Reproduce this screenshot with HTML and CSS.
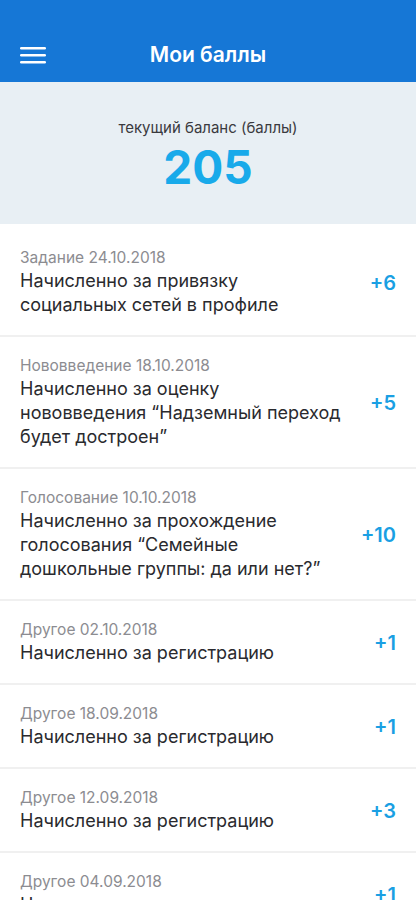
FILE: index.html
```html
<!DOCTYPE html>
<html lang="ru">
  <head>
    <meta charset="UTF-8" />
    <meta name="viewport" content="width=device-width, initial-scale=1.0" />
    <title>Мои баллы</title>
    <link rel="stylesheet" href="styles.css">
  </head>
  <body>
    <header class="top-bar">
      <button class="menu-btn" aria-label="Меню">
        <svg width="26" height="18" viewBox="0 0 26 18">
          <rect x="0" y="1" width="26" height="2.4" rx="1.2" fill="#fff" />
          <rect x="0" y="8" width="26" height="2.4" rx="1.2" fill="#fff" />
          <rect x="0" y="15" width="26" height="2.4" rx="1.2" fill="#fff" />
        </svg>
      </button>
      <h1 class="top-title">Мои баллы</h1>
    </header>

    <section class="balance">
      <div class="balance-label">текущий баланс (баллы)</div>
      <div class="balance-value">205</div>
    </section>

    <ul class="history">
      <li class="history-item">
        <div class="item-text">
          <div class="item-meta">Задание 24.10.2018</div>
          <div class="item-title">Начисленно за привязку социальных сетей в профиле</div>
        </div>
        <div class="item-points">+6</div>
      </li>
      <li class="history-item">
        <div class="item-text">
          <div class="item-meta">Нововведение 18.10.2018</div>
          <div class="item-title">Начисленно за оценку нововведения “Надземный переход будет достроен”</div>
        </div>
        <div class="item-points">+5</div>
      </li>
      <li class="history-item">
        <div class="item-text">
          <div class="item-meta">Голосование 10.10.2018</div>
          <div class="item-title">Начисленно за прохождение голосования “Семейные дошкольные группы: да или нет?”</div>
        </div>
        <div class="item-points">+10</div>
      </li>
      <li class="history-item">
        <div class="item-text">
          <div class="item-meta">Другое 02.10.2018</div>
          <div class="item-title">Начисленно за регистрацию</div>
        </div>
        <div class="item-points">+1</div>
      </li>
      <li class="history-item">
        <div class="item-text">
          <div class="item-meta">Другое 18.09.2018</div>
          <div class="item-title">Начисленно за регистрацию</div>
        </div>
        <div class="item-points">+1</div>
      </li>
      <li class="history-item">
        <div class="item-text">
          <div class="item-meta">Другое 12.09.2018</div>
          <div class="item-title">Начисленно за регистрацию</div>
        </div>
        <div class="item-points">+3</div>
      </li>
      <li class="history-item">
        <div class="item-text">
          <div class="item-meta">Другое 04.09.2018</div>
          <div class="item-title">Начисленно за регистрацию</div>
        </div>
        <div class="item-points">+1</div>
      </li>
    </ul>
  </body>
</html>
```

FILE: styles.css
```css
body {
  margin: 0;
  font-family: Inter, "Noto Sans", sans-serif;
  background-color: #fff;
  color: #2a2a2e;
}

.top-bar {
  height: 82px;
  background-color: #1677d6;
  display: flex;
  align-items: flex-end;
  justify-content: center;
  position: relative;
}

.menu-btn {
  position: absolute;
  left: 20px;
  bottom: 18px;
  padding: 0;
  border: none;
  background: none;
  display: flex;
}

.top-title {
  margin: 0 0 14px;
  color: #fff;
  font-size: 21px;
  font-weight: 600;
  line-height: 26px;
}

.balance {
  height: 142px;
  box-sizing: border-box;
  padding-top: 36px;
  background-color: #e8eff4;
  text-align: center;
}

.balance-label {
  font-size: 15px;
  line-height: 20px;
  color: #3a3a3e;
}

.balance-value {
  font-size: 46px;
  font-weight: 700;
  line-height: 58px;
  color: #18aaea;
}

.history {
  list-style: none;
  margin: 0;
  padding: 5px 0 0;
}

.history-item {
  display: flex;
  align-items: center;
  padding: 20px 20px 18px;
  border-bottom: 2px solid #f0f0f0;
}

.item-text {
  flex: 1;
}

.item-meta {
  font-size: 15.5px;
  line-height: 18px;
  color: #8c8c91;
}

.item-title {
  margin-top: 2px;
  font-size: 18px;
  line-height: 24px;
  color: #2a2a2e;
}

.item-points {
  width: 48px;
  flex-shrink: 0;
  text-align: right;
  font-size: 20px;
  font-weight: 600;
  color: #1a9fe3;
}
```
